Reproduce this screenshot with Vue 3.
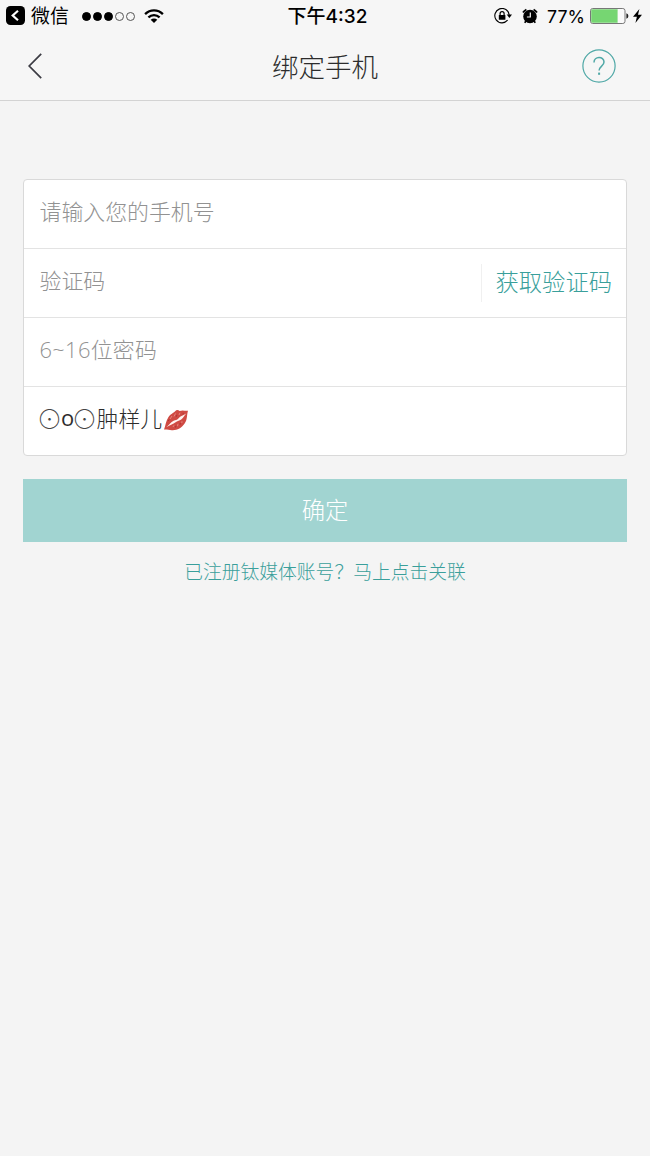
<script setup>
import { ref } from 'vue'

const phone = ref('')
const code = ref('')
const password = ref('')
const signal = [true, true, true, false, false]
</script>

<template>
  <div class="screen">
    <header class="header">
      <div class="status">
        <div class="side">
          <svg class="back-app" width="19" height="19" viewBox="0 0 19 19">
            <rect width="19" height="19" rx="4.5" fill="#000" />
            <path d="M12 4.7L6.7 9.5L12 14.3" fill="none" stroke="#fff" stroke-width="2.2" />
          </svg>
          <span class="app-name">微信</span>
          <span class="signal">
            <i v-for="(on, i) in signal" :key="i" :class="{ on }"></i>
          </span>
          <svg class="wifi" width="20" height="14" viewBox="0 0 20 14" fill="none" stroke="#000" stroke-width="2.3">
            <path d="M1.1 5.1C6.2 0 13.8 0 18.9 5.1" />
            <path d="M4.4 8.4C7.6 5.3 12.4 5.3 15.6 8.4" />
            <path d="M10 14L6.7 10.7C8.6 9 11.4 9 13.3 10.7Z" fill="#000" stroke="none" />
          </svg>
        </div>
        <div class="time">下午4:32</div>
        <div class="side right">
          <svg class="lock" width="18" height="16" viewBox="0 0 18 16">
            <path d="M13.6 12.2A7.2 7.2 0 1 1 15.2 7" fill="none" stroke="#000" stroke-width="1.1" />
            <path d="M12.7 6.6H18L15.4 10Z" fill="#000" />
            <rect x="4.8" y="7" width="6.6" height="4.8" rx=".5" fill="#000" />
            <path d="M6.1 7V5.6a2 2 0 0 1 4 0V7" fill="none" stroke="#000" stroke-width="1.2" />
          </svg>
          <svg class="alarm" width="16" height="16" viewBox="0 0 16 16">
            <circle cx="8" cy="8.5" r="6.8" fill="#000" />
            <path d="M1 4.6A9 9 0 0 1 4.4 1.5M15 4.6A9 9 0 0 0 11.6 1.5" stroke="#000" stroke-width="1.8" fill="none" />
            <path d="M3.8 13L2.8 14.8M12.2 13L13.2 14.8" stroke="#000" stroke-width="1.6" />
            <path d="M8.3 4.4V9H4.9" fill="none" stroke="#f6f6f6" stroke-width="1.2" />
          </svg>
          <span class="percent">77%</span>
          <svg class="battery" width="39" height="16" viewBox="0 0 39 16">
            <rect x=".5" y=".5" width="34.5" height="15" rx="2.2" fill="#fafafa" stroke="#777" />
            <path d="M2.6 1.2H27.6V14.8H2.6A1.4 1.4 0 0 1 1.2 13.4V2.6A1.4 1.4 0 0 1 2.6 1.2Z" fill="#76d672" />
            <path d="M36.4 5.3Q38.4 6 38.4 8T36.4 10.7Z" fill="#222" />
          </svg>
          <svg class="bolt" width="9" height="14" viewBox="0 0 9 14">
            <path d="M6.4 0L0 7.8H3.9L2.4 14L9 5.7H5Z" fill="#000" />
          </svg>
        </div>
      </div>
      <nav class="nav">
        <div class="nav-side">
          <svg class="chevron" width="16" height="28" viewBox="0 0 16 28">
            <path d="M14.2 1.8L2.2 14L14.2 26.2" fill="none" stroke="#3b3b43" stroke-width="1.7" />
          </svg>
        </div>
        <h1>绑定手机</h1>
        <div class="nav-side end">
          <svg class="help" width="34" height="34" viewBox="0 0 34 34" fill="none" stroke="#4fa8a6">
            <circle cx="17" cy="17" r="16.1" stroke-width="1.2" />
            <path d="M12 13.4C12 7 22 6.8 22 13C22 17 17.1 17.3 17.1 21.6" stroke-width="1.5" />
            <path d="M17.1 23.6V25.8" stroke-width="2" />
          </svg>
        </div>
      </nav>
    </header>

    <main>
      <form class="card" @submit.prevent>
        <div class="row"><input v-model="phone" placeholder="请输入您的手机号" /></div>
        <div class="row">
          <input v-model="code" placeholder="验证码" />
          <button type="button" class="get-code">获取验证码</button>
        </div>
        <div class="row"><input v-model="password" class="password" placeholder="6~16位密码" /></div>
        <div class="row nickname">
          <span class="eye">⊙</span><span class="mouth">o</span><span class="eye">⊙</span><span>肿样儿</span>
          <svg class="kiss" width="26" height="22" viewBox="0 0 26 22">
            <path d="M1 20.6C2.5 17 2.8 12 5.2 8.4C8 4.4 10.2 4.5 12.1 2.3C13.8.4 15.2 1 16.6 2.1C19.6.7 22.2 2.2 25 1.8C23.7 5.6 24.6 10.4 21.8 14.3C18.7 19.2 13.6 21.6 8.8 21.2C5.6 21 3.2 20 1 20.6Z" fill="#cf4a43" />
            <path d="M3.2 18.3C6.8 15.5 7.6 13 10.6 11.7C12.5 10.9 13.9 11 15.4 9.4C17.5 7.1 20.4 6.6 23.3 4.6C21.1 6.9 20.9 8.6 18.2 10.4C16.2 11.7 15 11.6 13 13.1C10.1 15.4 6.2 16.4 3.2 18.3Z" fill="#fff4f1" />
            <path d="M7 10L9 7M11 7.5L12.5 4.5M16 6L17 3.8M10 18L11 16.3M14.5 17.2L15 14.8M18.8 14L19 12.2" stroke="#e58a83" stroke-width=".9" />
            <path d="M5.3 12L6.3 10.4M13.2 7.8L14 5.8M19.5 5L20.6 4.3M12.5 18.5L13 16.8M17 15.8L17.3 14" stroke="#a52c2c" stroke-width=".8" />
          </svg>
        </div>
      </form>
      <button type="button" class="submit">确定</button>
      <a class="link">已注册钛媒体账号？马上点击关联</a>
    </main>
  </div>
</template>

<style>
body {
  background: #f4f4f4;
}
</style>

<style scoped>
.screen {
  min-height: 1156px;
  background: #f4f4f4;
  font-family: "Noto Sans CJK SC", sans-serif;
  font-weight: 300;
}
.header {
  box-sizing: border-box;
  height: 101px;
  background: #f6f6f6;
  border-bottom: 1px solid #d3d3d3;
}
.status {
  display: flex;
  align-items: center;
  height: 32px;
  color: #000;
  line-height: 32px;
}
.side {
  display: flex;
  flex: 1 1 0;
  align-items: center;
  padding-left: 6px;
}
.side.right {
  justify-content: flex-end;
  padding: 0 8px 0 0;
}
.back-app {
  margin-bottom: 2px;
}
.app-name {
  margin: 0 0 2px 6px;
  font-size: 18.9px;
  font-weight: 400;
}
.signal {
  display: flex;
  gap: 2px;
  margin-left: 13px;
}
.signal i {
  box-sizing: border-box;
  width: 9px;
  height: 9px;
  border: 1px solid #555;
  border-radius: 50%;
}
.signal .on {
  background: #000;
  border-color: #000;
}
.wifi {
  margin: 0 0 1px 9px;
}
.time {
  padding: 1px 0 0 7px;
  font: 500 19px/32px Inter, "Noto Sans CJK SC", sans-serif;
}
.alarm {
  margin-left: 10px;
}
.percent {
  margin: 1px 0 0 9px;
  font: 400 17.8px/32px Inter, sans-serif;
}
.battery {
  margin-left: 5px;
}
.bolt {
  margin-left: 4px;
}
.nav {
  display: flex;
  align-items: center;
  height: 68px;
  padding: 0 27px;
}
.nav-side {
  display: flex;
  flex: 1 1 0;
}
.nav-side.end {
  justify-content: flex-end;
}
.help {
  margin-right: 7px;
}
h1 {
  margin: 0;
  color: #2c2c2c;
  font-size: 26.5px;
  font-weight: 300;
  line-height: 40px;
}
main {
  display: flex;
  flex-direction: column;
  padding: 78px 23px 0;
}
.card {
  background: #fff;
  border: 1px solid #d9d9d9;
  border-radius: 4px;
}
.row {
  display: flex;
  box-sizing: border-box;
  align-items: center;
  height: 69px;
  padding: 0 0 7px 15.5px;
  font-size: 21.9px;
}
.row:first-child {
  height: 68px;
}
.row + .row {
  border-top: 1px solid #e3e3e3;
}
input {
  flex: 1;
  min-width: 0;
  height: 40px;
  padding: 0;
  color: #333;
  font: inherit;
  background: none;
  border: 0;
  outline: 0;
}
input::placeholder {
  color: #929292;
  opacity: 1;
}
.password {
  padding-top: 2px;
  font-family: "Open Sans", "Noto Sans CJK SC", sans-serif;
  letter-spacing: 0.3px;
}
button {
  padding: 0;
  font: 300 23.3px/38px "Noto Sans CJK SC", sans-serif;
  border: 0;
}
.get-code {
  height: 38px;
  margin-top: 7px;
  padding: 0 14px 4px;
  color: #3a9f9b;
  line-height: 34px;
  background: none;
  border-left: 1px solid #f0f0f0;
}
.nickname {
  color: #2c2c2c;
}
.eye {
  margin-left: -3px;
  color: #444;
  font-size: 26px;
  font-weight: 100;
  line-height: 40px;
  letter-spacing: -1px;
}
.mouth {
  width: 13px;
  font-family: "Open Sans", sans-serif;
  font-weight: 400;
  text-align: center;
}
.eye + .mouth {
  margin-left: -0.5px;
}
.mouth + .eye {
  margin-left: -2.5px;
}
.kiss {
  margin: 5px 0 0 1px;
}
.submit {
  height: 63px;
  margin-top: 23px;
  padding-bottom: 4px;
  color: #fff;
  background: #a1d4d1;
}
.link {
  align-self: center;
  margin-top: 15px;
  color: #3a9f9b;
  font-size: 18.8px;
  line-height: 28px;
}
</style>
